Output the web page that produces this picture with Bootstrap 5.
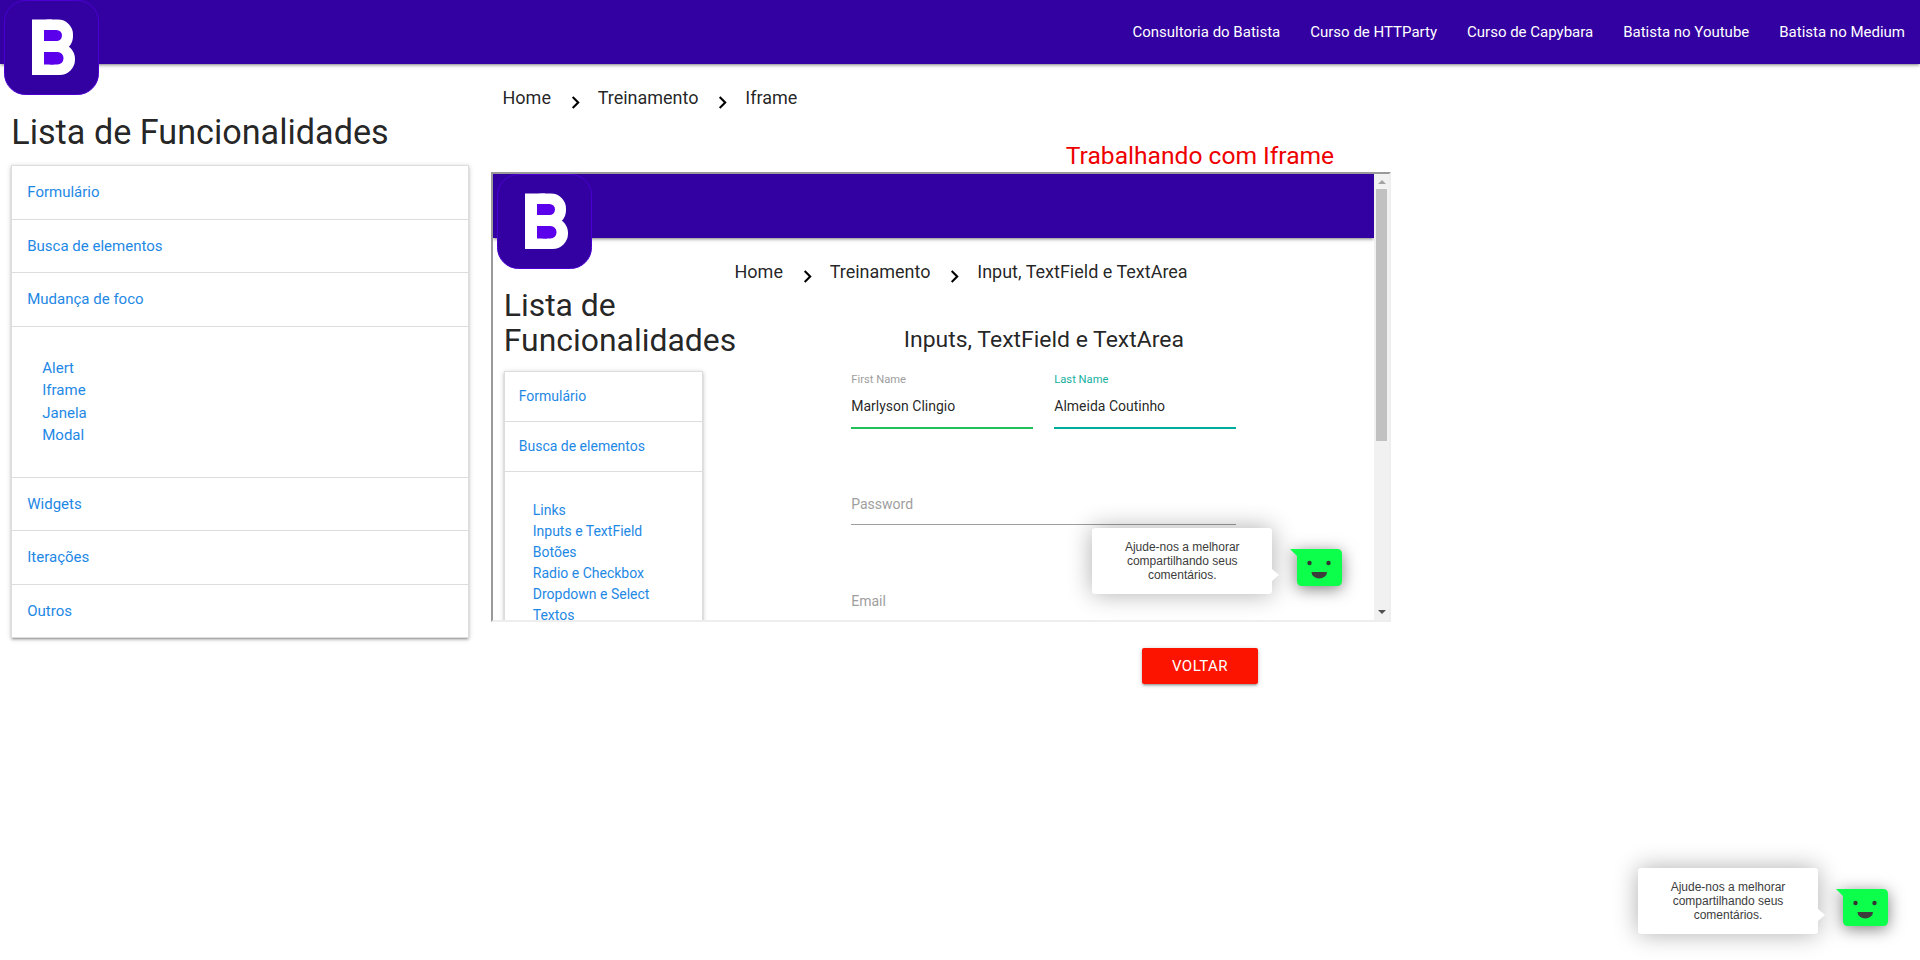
<!DOCTYPE html>
<html lang="pt-BR">
<head>
<meta charset="utf-8">
<meta name="viewport" content="width=device-width, initial-scale=1">
<title>Trabalhando com Iframe</title>
<link rel="stylesheet" href="https://cdn.jsdelivr.net/npm/bootstrap@5.3.0/dist/css/bootstrap.min.css">
<style>
body{font-family:Roboto,"Liberation Sans",sans-serif;font-size:15px;line-height:1.5;color:rgba(0,0,0,.87);height:960px;overflow:hidden;background:#fff}
a{text-decoration:none}
.page{--u:15px;font-size:15px}
.page.inner{--u:14px;font-size:14px}
.topbar{height:64px;padding:0;background:#3300a2;box-shadow:0 2px 2px 0 rgba(0,0,0,.14),0 3px 1px -2px rgba(0,0,0,.12),0 1px 5px 0 rgba(0,0,0,.2);position:relative;z-index:1}
.topbar .nav-link{color:#fff;padding:0 15px;font-size:15px;line-height:64px}
.logo{position:absolute;left:4px;top:0;width:95px;height:95px}
.side{width:25%;padding:0 calc(var(--u)*.75);flex:none}
.side h4{font-size:calc(var(--u)*2.28);line-height:1.1;font-weight:400;margin:50.1px 0 calc(var(--u)*.912)}
.inner .side h4{margin-top:49.7px}
.menu{border:1px solid #ddd;border-radius:0;border-bottom:0;box-shadow:0 2px 2px 0 rgba(0,0,0,.14),0 3px 1px -2px rgba(0,0,0,.12),0 1px 5px 0 rgba(0,0,0,.2)}
.menu .list-group-item{border:0;border-bottom:1px solid #ddd;border-radius:0;padding:var(--u);color:#1e88e5}
.menu .list-group-item.sub{padding:calc(var(--u)*2)}
.menu a{color:#1e88e5;display:block}
.main{flex:1 1 0;min-width:0}
.crumbs{font-size:18px;line-height:27px;height:78px;padding:20px 0 0 22.5px}
.inner .crumbs{height:87px;padding-left:21px}
.crumbs svg{width:25px;height:25px;margin:6px 10px 0 11.7px;fill:#000}
.frame{width:900px;height:450px;margin:3px 0 0 11.25px;border:2px solid;border-color:#9a9a9a #eee #eee #9a9a9a;overflow:hidden;position:relative}
.inner{width:881px;height:446px;overflow:hidden;position:relative}
.scroller{width:15px;background:#f1f1f1}
.thumb{height:252px;width:11px;background:#c1c1c1;margin:0 2px}
.voltar{background:#fc1400;color:#fff;width:116px;height:36px;line-height:36px;border-radius:2px;padding:0;border:0;font-size:15px;letter-spacing:.5px;margin-top:26px;box-shadow:0 2px 2px 0 rgba(0,0,0,.14),0 3px 1px -2px rgba(0,0,0,.12),0 1px 5px 0 rgba(0,0,0,.2)}
.title{font-size:calc(var(--u)*1.64);line-height:27px;font-weight:400;margin:0;text-align:center}
.title.alerta{color:#e00}
.inner .title{line-height:29px}
.fields{width:385px;margin-left:137.75px;padding-top:16px}
.fld{border-bottom:1px solid #9e9e9e;line-height:21px;color:#9e9e9e}
.fld.half{width:182px;height:59px}
.fld.half div{color:rgba(0,0,0,.87);margin-top:7px}
.fld.pass{height:96px;padding-top:65px}
.fld.mail{height:97px;padding-top:66px}
.fld small{display:block;font-size:11.2px;line-height:19px}
.fld.ok{border-bottom:2px solid #22c05a}
.fld.on{border-bottom:2px solid #00ad9d}
.fld.on small{color:#17b09f}
.feedback{position:absolute;right:32px;bottom:26px;z-index:5}
.tip{width:180px;height:66px;background:#fff;border-radius:3px;box-shadow:0 0 24px rgba(0,0,0,.32);font:12px/14px "Liberation Sans",sans-serif;color:#3c3c3c;padding:12px 19.5px 12px 20.5px;text-align:center;position:relative}
.tip::after{content:"";position:absolute;left:100%;top:41px;border:6px solid transparent;border-left:7px solid #fff;border-right:0}
.face{width:52px;height:37px;margin:13px 0 0 18.5px;overflow:visible;filter:drop-shadow(0 3px 8px rgba(0,0,0,.5))}
</style>
</head>
<body>
<svg class="d-none">
  <symbol id="chev" viewBox="0 0 24 24"><path d="M10 6 8.59 7.41 13.17 12l-4.58 4.59L10 18l6-6z"/></symbol>
  <symbol id="brand" viewBox="0 0 95 95">
    <rect x=".5" y=".5" width="94" height="94" rx="21" fill="#3300a2" stroke="#4a00d0" stroke-width="1"/>
    <g fill="#fff"><rect x="28" y="19.500" width="20" height="55.500"/><rect x="30" y="19.500" width="39" height="32" rx="15"/><rect x="30" y="43.500" width="41" height="31.500" rx="15.500"/><rect x="48" y="40" width="16" height="12"/></g>
    <g fill="#5a00ea"><rect x="40" y="30" width="10" height="11"/><rect x="41" y="30" width="17" height="11" rx="5.500"/><rect x="40" y="52" width="10" height="12.500"/><rect x="41" y="52" width="18.500" height="12.500" rx="6"/></g>
  </symbol>
  <symbol id="smile" viewBox="0 0 52 37"><path fill="#0cff4a" d="M0 0h47q5 0 5 5v27q0 5-5 5H12q-5 0-5-5V7z"/><circle cx="19.500" cy="14" r="2.200" fill="#333"/><circle cx="38.500" cy="14" r="2.200" fill="#333"/><path fill="#3c3c3c" d="M21.500 23h15.500a7.700 6.500 0 0 1-15.500 0z"/></symbol>
</svg>
<div class="page">
  <nav class="topbar navbar d-flex justify-content-end">
    <svg class="logo"><use href="#brand"/></svg>
    <div class="nav flex-nowrap">
      <a class="nav-link" href="#">Consultoria do Batista</a><a class="nav-link" href="#">Curso de HTTParty</a><a class="nav-link" href="#">Curso de Capybara</a><a class="nav-link" href="#">Batista no Youtube</a><a class="nav-link" href="#">Batista no Medium</a>
    </div>
  </nav>
  <div class="d-flex">
    <aside class="side">
      <h4>Lista de Funcionalidades</h4>
      <div class="menu list-group">
        <div class="list-group-item">Formulário</div>
        <div class="list-group-item">Busca de elementos</div>
        <div class="list-group-item">Mudança de foco</div>
        <div class="list-group-item sub"><a href="#">Alert</a><a href="#">Iframe</a><a href="#">Janela</a><a href="#">Modal</a></div>
        <div class="list-group-item">Widgets</div>
        <div class="list-group-item">Iterações</div>
        <div class="list-group-item">Outros</div>
      </div>
    </aside>
    <main class="main">
      <div class="crumbs d-flex"><span>Home</span><svg><use href="#chev"/></svg><span>Treinamento</span><svg><use href="#chev"/></svg><span>Iframe</span></div>
      <h5 class="title alerta">Trabalhando com Iframe</h5>
      <div class="frame d-flex">
        <div class="page inner">
          <nav class="topbar navbar"><svg class="logo"><use href="#brand"/></svg></nav>
          <div class="d-flex">
            <aside class="side">
              <h4>Lista de Funcionalidades</h4>
              <div class="menu list-group">
                <div class="list-group-item">Formulário</div>
                <div class="list-group-item">Busca de elementos</div>
                <div class="list-group-item sub"><a href="#">Links</a><a href="#">Inputs e TextField</a><a href="#">Botões</a><a href="#">Radio e Checkbox</a><a href="#">Dropdown e Select</a><a href="#">Textos</a></div>
              </div>
            </aside>
            <section class="main">
              <div class="crumbs d-flex"><span>Home</span><svg><use href="#chev"/></svg><span>Treinamento</span><svg><use href="#chev"/></svg><span>Input, TextField e TextArea</span></div>
              <h5 class="title">Inputs, TextField e TextArea</h5>
              <div class="fields">
                <div class="d-flex justify-content-between">
                  <div class="fld half ok"><small>First Name</small><div>Marlyson Clingio</div></div>
                  <div class="fld half on"><small>Last Name</small><div>Almeida Coutinho</div></div>
                </div>
                <div class="fld pass">Password</div>
                <div class="fld mail">Email</div>
              </div>
            </section>
          </div>
          <div class="feedback d-flex align-items-center">
            <div class="tip">Ajude-nos a melhorar compartilhando seus comentários.</div>
            <svg class="face"><use href="#smile"/></svg>
          </div>
        </div>
        <div class="scroller d-flex flex-column">
          <svg width="15" height="15"><path d="M4 10h8L8 6z" fill="#a3a3a3"/></svg>
          <div class="thumb"></div>
          <svg class="mt-auto" width="15" height="15"><path d="M4 5h8L8 9z" fill="#505050"/></svg>
        </div>
      </div>
      <div class="text-center"><button class="voltar">VOLTAR</button></div>
    </main>
  </div>
  <div class="feedback d-flex align-items-center">
    <div class="tip">Ajude-nos a melhorar compartilhando seus comentários.</div>
    <svg class="face"><use href="#smile"/></svg>
  </div>
</div>
<script src="https://cdn.jsdelivr.net/npm/bootstrap@5.3.0/dist/js/bootstrap.bundle.min.js"></script>
</body>
</html>
